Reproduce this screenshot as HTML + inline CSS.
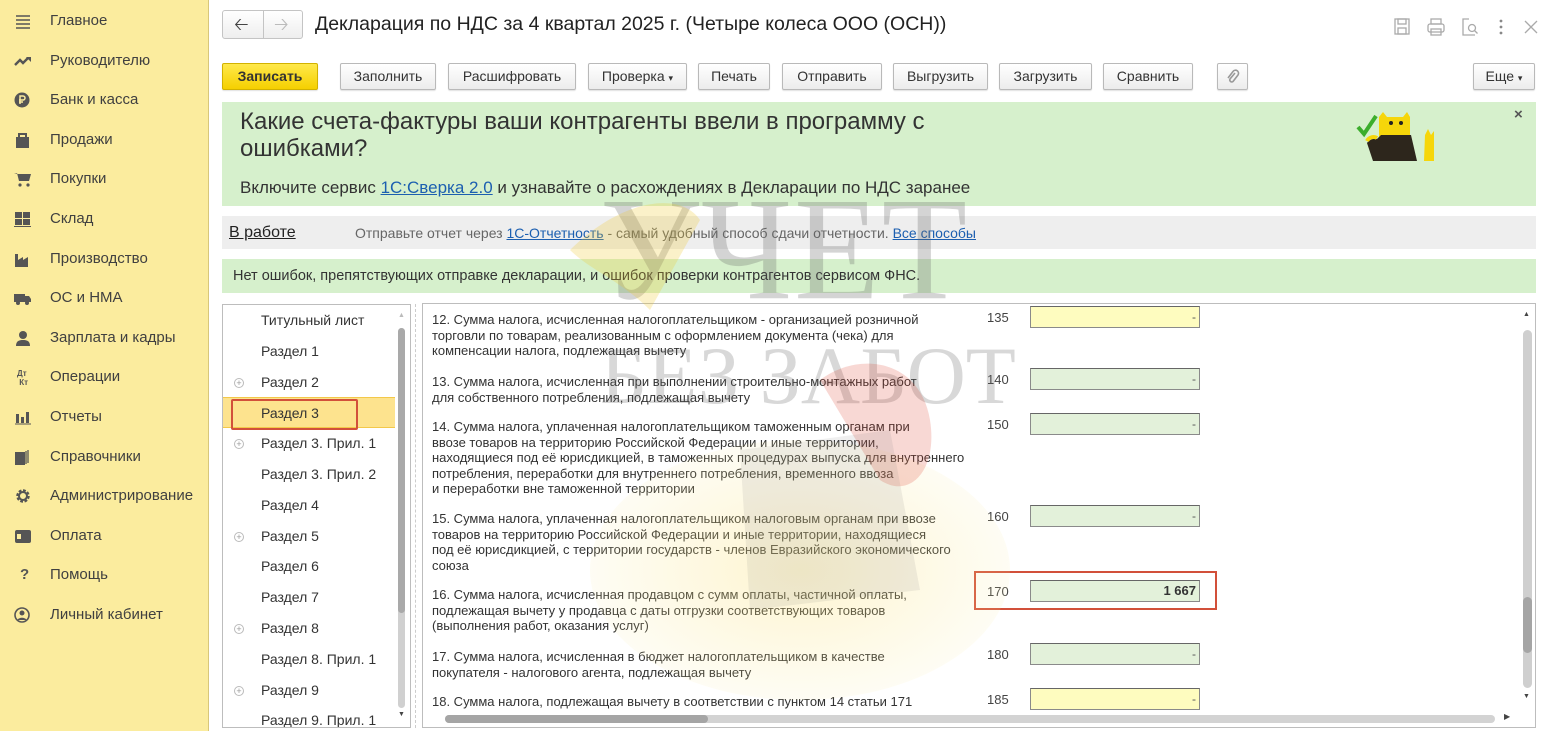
<!DOCTYPE html>
<html><head><meta charset="utf-8">
<style>
*{box-sizing:border-box;margin:0;padding:0}
body{width:1553px;height:731px;overflow:hidden;background:#fff;font-family:"Liberation Sans",Arial,sans-serif;color:#333;position:relative}
.abs{position:absolute}
#side{left:0;top:0;width:209px;height:731px;background:#fbec9e;border-right:1px solid #d8c77a}
.si{position:absolute;left:0;height:24px;line-height:24px;font-size:15px;color:#404040;white-space:nowrap}
.si .ic{position:absolute;left:14px;top:4px;width:18px;height:16px}
.si span{position:absolute;left:50px}
.btn{position:absolute;top:63px;height:27px;border:1px solid #b9b9b9;border-radius:2px;background:linear-gradient(#fff,#ececec);font-size:14px;line-height:25px;text-align:center;color:#333;box-shadow:0 1px 1px rgba(0,0,0,.12)}
.tree{position:absolute;left:261px;font-size:14px;color:#333;line-height:20px}
.plus{position:absolute;left:234px;width:10px;height:10px;border:1px solid #bbb;border-radius:50%;font-size:9px;line-height:8px;text-align:center;color:#999}
.row{position:absolute;left:432px;font-size:13px;line-height:15.5px;color:#333;white-space:nowrap;transform-origin:left top}
.code{position:absolute;left:987px;font-size:13px;color:#444}
.fld{position:absolute;left:1030px;width:170px;height:22px;border:1px solid #8a8a8a;border-top-color:#666;background:#e3f1da;font-size:12px;text-align:right;padding-right:3px;line-height:20px;color:#555}
.fld.y{background:#fefcbf}
.wm{position:absolute;pointer-events:none;z-index:5}
</style></head><body>

<div id="side" class="abs">
<div class="si" style="top:9px"><svg class="ic" viewBox="0 0 18 16"><path d="M2 3h14M2 7h14M2 11h14M2 15h14" stroke="#555" stroke-width="1.6"/></svg><span>Главное</span></div>
<div class="si" style="top:49px"><svg class="ic" viewBox="0 0 18 16"><path d="M1 12l5-5 3 3 5-5" stroke="#555" stroke-width="2.4" fill="none"/><path d="M12 4h5v5z" fill="#555"/></svg><span>Руководителю</span></div>
<div class="si" style="top:88px"><svg class="ic" viewBox="0 0 18 16"><circle cx="8" cy="8" r="7.5" fill="#555"/><path d="M6 12V4h3a2 2 0 010 4H5M5 10h4" stroke="#fbec9e" stroke-width="1.5" fill="none"/></svg><span>Банк и касса</span></div>
<div class="si" style="top:128px"><svg class="ic" viewBox="0 0 18 16"><rect x="2" y="5" width="13" height="11" fill="#555"/><path d="M5 6V2h7v4" stroke="#555" stroke-width="2" fill="none"/></svg><span>Продажи</span></div>
<div class="si" style="top:167px"><svg class="ic" viewBox="0 0 18 16"><path d="M0 2h3l2 8h10l2-7H4" fill="#555"/><circle cx="6" cy="14" r="1.6" fill="#555"/><circle cx="14" cy="14" r="1.6" fill="#555"/></svg><span>Покупки</span></div>
<div class="si" style="top:207px"><svg class="ic" viewBox="0 0 18 16"><rect x="1" y="1" width="7" height="6" fill="#555"/><rect x="9" y="1" width="7" height="6" fill="#555"/><rect x="1" y="8" width="7" height="6" fill="#555"/><rect x="9" y="8" width="7" height="6" fill="#555"/><path d="M0 15.5h17" stroke="#555"/></svg><span>Склад</span></div>
<div class="si" style="top:247px"><svg class="ic" viewBox="0 0 18 16"><path d="M1 16V3h3v6l5-3v3l5-3v10z" fill="#555"/></svg><span>Производство</span></div>
<div class="si" style="top:286px"><svg class="ic" viewBox="0 0 18 16"><rect x="0" y="4" width="11" height="8" fill="#555"/><path d="M11 6h4l2 3v3h-6z" fill="#555"/><circle cx="4" cy="13" r="2" fill="#555"/><circle cx="13" cy="13" r="2" fill="#555"/></svg><span>ОС и НМА</span></div>
<div class="si" style="top:326px"><svg class="ic" viewBox="0 0 18 16"><circle cx="9" cy="5" r="4" fill="#555"/><path d="M2 16c0-5 3-6 7-6s7 1 7 6z" fill="#555"/></svg><span>Зарплата и кадры</span></div>
<div class="si" style="top:365px"><span style="left:17px;font-size:8px;line-height:9px;top:4px;font-weight:bold;color:#555">Дт<br>&nbsp;Кт</span><span>Операции</span></div>
<div class="si" style="top:405px"><svg class="ic" viewBox="0 0 18 16"><path d="M2 5h3v9H2zM7 8h3v6H7zM12 3h3v11h-3z" fill="#555"/><path d="M1 15h16" stroke="#555"/></svg><span>Отчеты</span></div>
<div class="si" style="top:445px"><svg class="ic" viewBox="0 0 18 16"><rect x="1" y="3" width="10" height="13" fill="#555"/><path d="M12 2v13M14 1v13" stroke="#555" stroke-width="1.3"/></svg><span>Справочники</span></div>
<div class="si" style="top:484px"><svg class="ic" viewBox="0 0 18 16"><circle cx="9" cy="8" r="5" fill="none" stroke="#555" stroke-width="3.5" stroke-dasharray="2.5 1.4"/><circle cx="9" cy="8" r="4" fill="none" stroke="#555" stroke-width="2"/></svg><span>Администрирование</span></div>
<div class="si" style="top:524px"><svg class="ic" viewBox="0 0 18 16"><rect x="1" y="2" width="16" height="13" rx="2" fill="#555"/><rect x="3" y="6" width="4" height="5" fill="#fbec9e"/></svg><span>Оплата</span></div>
<div class="si" style="top:563px"><span style="left:20px;font-weight:bold;color:#555">?</span><span>Помощь</span></div>
<div class="si" style="top:603px"><svg class="ic" viewBox="0 0 18 16"><circle cx="8" cy="8" r="7" fill="none" stroke="#555" stroke-width="1.6"/><circle cx="8" cy="6" r="2.5" fill="#555"/><path d="M3.5 13c1-3 8-3 9 0" fill="#555"/></svg><span>Личный кабинет</span></div>
</div>

<!-- header -->
<div class="abs" style="left:222px;top:10px;width:81px;height:29px;border:1px solid #c4c4c4;border-radius:3px;background:linear-gradient(#fff,#eee)"></div>
<div class="abs" style="left:263px;top:11px;width:1px;height:27px;background:#c4c4c4"></div>
<div class="abs" style="left:234px;top:12px;font-size:18px;color:#444">&#129120;</div>
<div class="abs" style="left:274px;top:12px;font-size:18px;color:#bbb">&#129122;</div>
<div class="abs" style="left:315px;top:13px;font-size:19.5px;color:#222;white-space:nowrap">Декларация по НДС за 4 квартал 2025 г. (Четыре колеса ООО (ОСН))</div>
<svg class="abs" style="left:1393px;top:17px" width="150" height="20" viewBox="0 0 150 20">
<g stroke="#aaa" fill="none" stroke-width="1.3"><rect x="2" y="2" width="14" height="15"/><rect x="5" y="2" width="8" height="5"/><rect x="5" y="11" width="8" height="6"/>
<rect x="35" y="7" width="16" height="8" rx="2"/><rect x="38" y="2" width="10" height="5"/><rect x="38" y="12" width="10" height="6"/>
<path d="M76 2h-6v16h12"/><circle cx="79" cy="11" r="3.5"/><path d="M81.5 13.5l3 3"/>
<path d="M132 4l12 12M144 4l-12 12"/></g>
<g fill="#888"><circle cx="108" cy="4" r="1.4"/><circle cx="108" cy="10" r="1.4"/><circle cx="108" cy="16" r="1.4"/></g></svg>

<!-- toolbar -->
<div class="btn" style="left:222px;width:96px;background:linear-gradient(#ffe94a,#f5d000);border-color:#d2b200;font-weight:bold;color:#333">Записать</div>
<div class="btn" style="left:340px;width:96px">Заполнить</div>
<div class="btn" style="left:448px;width:128px">Расшифровать</div>
<div class="btn" style="left:588px;width:99px">Проверка <span style="font-size:9px">▾</span></div>
<div class="btn" style="left:698px;width:72px">Печать</div>
<div class="btn" style="left:782px;width:100px">Отправить</div>
<div class="btn" style="left:893px;width:95px">Выгрузить</div>
<div class="btn" style="left:999px;width:93px">Загрузить</div>
<div class="btn" style="left:1103px;width:90px">Сравнить</div>
<div class="btn" style="left:1217px;width:31px"><svg width="14" height="16" viewBox="0 0 14 16" style="margin-top:5px"><path d="M9 4l-5 6a2 2 0 003 2.5l5-6.5a3 3 0 00-5-3.5l-5 6.5" stroke="#999" stroke-width="1.6" fill="none"/></svg></div>
<div class="btn" style="left:1473px;width:62px">Еще <span style="font-size:9px">▾</span></div>

<!-- banner -->
<div class="abs" style="left:222px;top:102px;width:1314px;height:104px;background:#d6f0cc"></div>
<div class="abs" style="left:240px;top:108px;font-size:24px;line-height:27px;color:#333">Какие счета-фактуры ваши контрагенты ввели в программу с<br>ошибками?</div>
<div class="abs" style="left:240px;top:178px;font-size:17px;color:#333">Включите сервис <span style="color:#1c5fb0;text-decoration:underline">1С:Сверка 2.0</span> и узнавайте о расхождениях в Декларации по НДС заранее</div>
<div class="abs" style="left:1514px;top:106px;font-size:15px;font-weight:bold;color:#555">×</div>
<svg class="abs" style="left:1355px;top:105px" width="96" height="56" viewBox="0 0 96 56">
<path d="M3 22l6 7 12-18" stroke="#3cae2d" stroke-width="4" fill="none"/>
<path d="M24 12l4-5 4 5h16l4-5 3 5v20H24z" fill="#f6d60a"/>
<circle cx="36" cy="18" r="2" fill="#222"/><circle cx="46" cy="18" r="2" fill="#222"/>
<path d="M12 38c3-4 8-5 10-4l4-4h30l6 26H18z" fill="#2d261c"/>
<path d="M70 30l3-6 3 6 3-4 0 30h-10z" fill="#f6d60a"/>
<path d="M12 36c2-4 7-5 10-3" stroke="#f6d60a" stroke-width="4" fill="none"/>
</svg>

<!-- status bar -->
<div class="abs" style="left:222px;top:216px;width:1314px;height:33px;background:#eeeeee"></div>
<div class="abs" style="left:229px;top:224px;font-size:16px;color:#222;text-decoration:underline">В работе</div>
<div class="abs" style="left:355px;top:225px;font-size:14px;color:#666;white-space:nowrap">Отправьте отчет через <span style="color:#1c5fb0;text-decoration:underline">1С-Отчетность</span> - самый удобный способ сдачи отчетности. <span style="color:#1c5fb0;text-decoration:underline">Все способы</span></div>
<div class="abs" style="left:222px;top:259px;width:1314px;height:34px;background:#d6f0cc"></div>
<div class="abs" style="left:233px;top:268px;font-size:14.5px;color:#333;white-space:nowrap">Нет ошибок, препятствующих отправке декларации, и ошибок проверки контрагентов сервисом ФНС.</div>

<!-- left tree -->
<div class="abs" style="left:222px;top:304px;width:189px;height:424px;border:1px solid #bdbdbd"></div>
<div class="abs" style="left:415px;top:304px;width:0;height:424px;border-left:1px dashed #ccc"></div>
<div class="abs" style="left:223px;top:397px;width:172px;height:31px;background:#fde38e;border-top:1px solid #f3c84a;border-bottom:1px solid #f3c84a"></div>
<div class="abs" style="left:231px;top:399px;width:127px;height:31px;border:2px solid #d2503a;border-radius:2px"></div>
<div class="abs" style="left:398px;top:328px;width:7px;height:380px;background:#d0d0d0;border-radius:4px"></div>
<div class="abs" style="left:398px;top:328px;width:7px;height:285px;background:#a9a9a9;border-radius:4px"></div>
<div class="abs" style="left:398px;top:312px;font-size:7px;color:#bbb">▲</div>
<div class="abs" style="left:398px;top:711px;font-size:7px;color:#444">▼</div>
<div class="tree" style="top:310px">Титульный лист</div>
<div class="tree" style="top:341px">Раздел 1</div>
<div class="tree" style="top:372px">Раздел 2</div><div class="plus" style="top:378px">+</div>
<div class="tree" style="top:403px">Раздел 3</div>
<div class="tree" style="top:433px">Раздел 3. Прил. 1</div><div class="plus" style="top:439px">+</div>
<div class="tree" style="top:464px">Раздел 3. Прил. 2</div>
<div class="tree" style="top:495px">Раздел 4</div>
<div class="tree" style="top:526px">Раздел 5</div><div class="plus" style="top:532px">+</div>
<div class="tree" style="top:556px">Раздел 6</div>
<div class="tree" style="top:587px">Раздел 7</div>
<div class="tree" style="top:618px">Раздел 8</div><div class="plus" style="top:624px">+</div>
<div class="tree" style="top:649px">Раздел 8. Прил. 1</div>
<div class="tree" style="top:680px">Раздел 9</div><div class="plus" style="top:686px">+</div>
<div class="tree" style="top:710px;height:17px;overflow:hidden">Раздел 9. Прил. 1</div>

<!-- right panel -->
<div class="abs" style="left:422px;top:303px;width:1114px;height:425px;border:1px solid #bdbdbd"></div>
<div class="abs" style="left:1523px;top:330px;width:9px;height:358px;background:#cfcfcf;border-radius:5px"></div>
<div class="abs" style="left:1523px;top:597px;width:9px;height:56px;background:#a5a5a5;border-radius:5px"></div>
<div class="abs" style="left:1523px;top:311px;font-size:7px;color:#444">▲</div>
<div class="abs" style="left:1523px;top:693px;font-size:7px;color:#444">▼</div>
<div class="abs" style="left:445px;top:715px;width:1050px;height:8px;background:#d3d3d3;border-radius:4px"></div>
<div class="abs" style="left:445px;top:715px;width:263px;height:8px;background:#a5a5a5;border-radius:4px"></div>
<div class="abs" style="left:1504px;top:712px;font-size:8px;color:#444">▶</div>

<div class="row" style="top:312px">12. Сумма налога, исчисленная налогоплательщиком - организацией розничной<br>торговли по товарам, реализованным с оформлением документа (чека) для<br>компенсации налога, подлежащая вычету</div>
<div class="code" style="top:310px">135</div><div class="fld y" style="top:306px">-</div>
<div class="row" style="top:374px">13. Сумма налога, исчисленная при выполнении строительно-монтажных работ<br>для собственного потребления, подлежащая вычету</div>
<div class="code" style="top:372px">140</div><div class="fld" style="top:368px">-</div>
<div class="row" style="top:419px">14. Сумма налога, уплаченная налогоплательщиком таможенным органам при<br>ввозе товаров на территорию Российской Федерации и иные территории,<br>находящиеся под её юрисдикцией, в таможенных процедурах выпуска для внутреннего<br>потребления, переработки для внутреннего потребления, временного ввоза<br>и переработки вне таможенной территории</div>
<div class="code" style="top:417px">150</div><div class="fld" style="top:413px">-</div>
<div class="row" style="top:511px">15. Сумма налога, уплаченная налогоплательщиком налоговым органам при ввозе<br>товаров на территорию Российской Федерации и иные территории, находящиеся<br>под её юрисдикцией, с территории государств - членов Евразийского экономического<br>союза</div>
<div class="code" style="top:509px">160</div><div class="fld" style="top:505px">-</div>
<div class="row" style="top:587px">16. Сумма налога, исчисленная продавцом с сумм оплаты, частичной оплаты,<br>подлежащая вычету у продавца с даты отгрузки соответствующих товаров<br>(выполнения работ, оказания услуг)</div>
<div class="abs" style="left:974px;top:571px;width:243px;height:39px;border:2px solid #d2503a"></div>
<div class="code" style="top:584px">170</div><div class="fld" style="top:580px;font-weight:bold;color:#333;font-size:13px">1 667</div>
<div class="row" style="top:649px">17. Сумма налога, исчисленная в бюджет налогоплательщиком в качестве<br>покупателя - налогового агента, подлежащая вычету</div>
<div class="code" style="top:647px">180</div><div class="fld" style="top:643px">-</div>
<div class="row" style="top:694px">18. Сумма налога, подлежащая вычету в соответствии с пунктом 14 статьи 171</div>
<div class="code" style="top:692px">185</div><div class="fld y" style="top:688px">-</div>

<!-- watermark (on top, translucent) -->
<div class="wm" style="left:590px;top:440px;width:420px;height:260px;border-radius:50%;background:radial-gradient(ellipse,rgba(250,225,120,.35),rgba(250,235,160,.12) 70%,transparent)"></div>
<div class="wm" style="left:600px;top:180px;font-family:'Liberation Serif',serif;font-size:140px;line-height:140px;color:rgba(100,100,100,.28);letter-spacing:2px;transform:scaleY(1.05)">УЧЕТ</div>
<div class="wm" style="left:600px;top:335px;font-family:'Liberation Serif',serif;font-size:82px;line-height:82px;color:rgba(100,100,100,.25);letter-spacing:0">БЕЗ ЗАБОТ</div>
<svg class="wm" style="left:560px;top:190px" width="460" height="460" viewBox="0 0 460 460">
<path d="M10 60C60 10 120 0 140 30L90 120C60 90 30 80 10 60z" fill="rgba(240,200,40,.25)"/>
<path d="M260 190c40-30 100-20 110 40 8 50-20 80-50 60z" fill="rgba(220,60,40,.2)"/>
<path d="M180 260l150-20 30 160-170 20z" fill="rgba(120,120,120,.12)"/>
</svg>
</body></html>
